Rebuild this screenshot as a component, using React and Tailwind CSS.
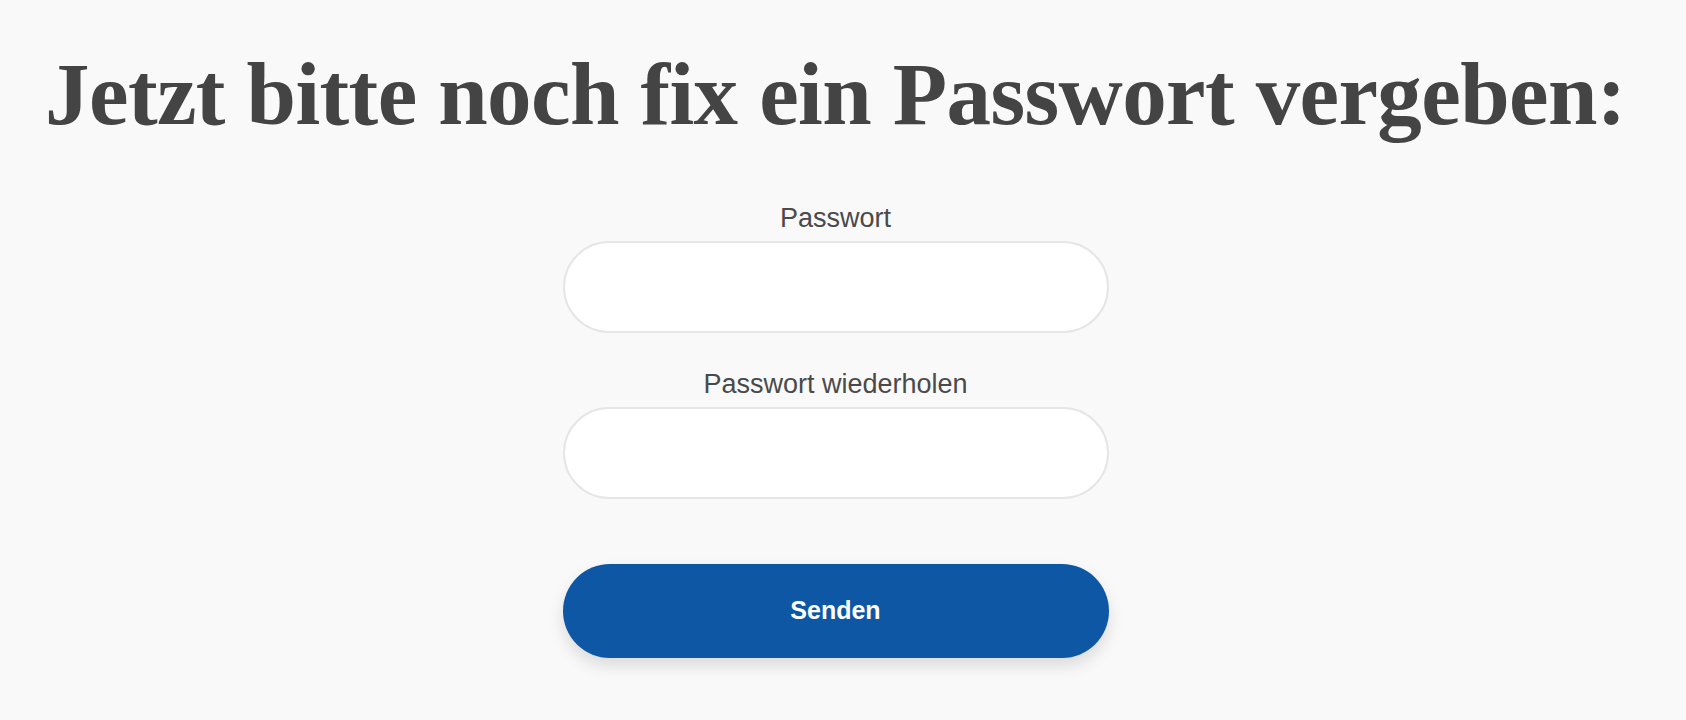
export default function App() {
  return (
    <div className="min-h-[720px] w-full bg-[#f9f9f9]">
      <div className="w-[1671px] flex flex-col items-center">
        <h1
          className="mt-[50px] text-[89px] leading-none font-bold text-[#444444] tracking-[-0.6px] whitespace-nowrap"
          style={{ fontFamily: '"Liberation Serif", "Times New Roman", serif' }}
        >
          Jetzt bitte noch fix ein Passwort vergeben:
        </h1>
        <form
          className="mt-[64px] w-[546px] flex flex-col items-center"
          style={{ fontFamily: '"Liberation Sans", Arial, sans-serif' }}
          onSubmit={(e) => e.preventDefault()}
        >
          <label className="text-[27px] leading-[31px] text-[#4a4a4a]">Passwort</label>
          <input
            type="password"
            className="mt-[7px] w-full h-[92px] rounded-full bg-white border-2 border-[#e6e6e6] outline-none px-8 text-[26px]"
          />
          <label className="mt-[36px] text-[27px] leading-[31px] text-[#4a4a4a]">Passwort wiederholen</label>
          <input
            type="password"
            className="mt-[7px] w-full h-[92px] rounded-full bg-white border-2 border-[#e6e6e6] outline-none px-8 text-[26px]"
          />
          <button
            type="submit"
            className="mt-[65px] w-full h-[94px] rounded-full bg-[#0e57a5] text-white text-[25px] font-bold shadow-[0_8px_16px_rgba(0,0,0,0.12)]"
          >
            Senden
          </button>
        </form>
      </div>
    </div>
  );
}
